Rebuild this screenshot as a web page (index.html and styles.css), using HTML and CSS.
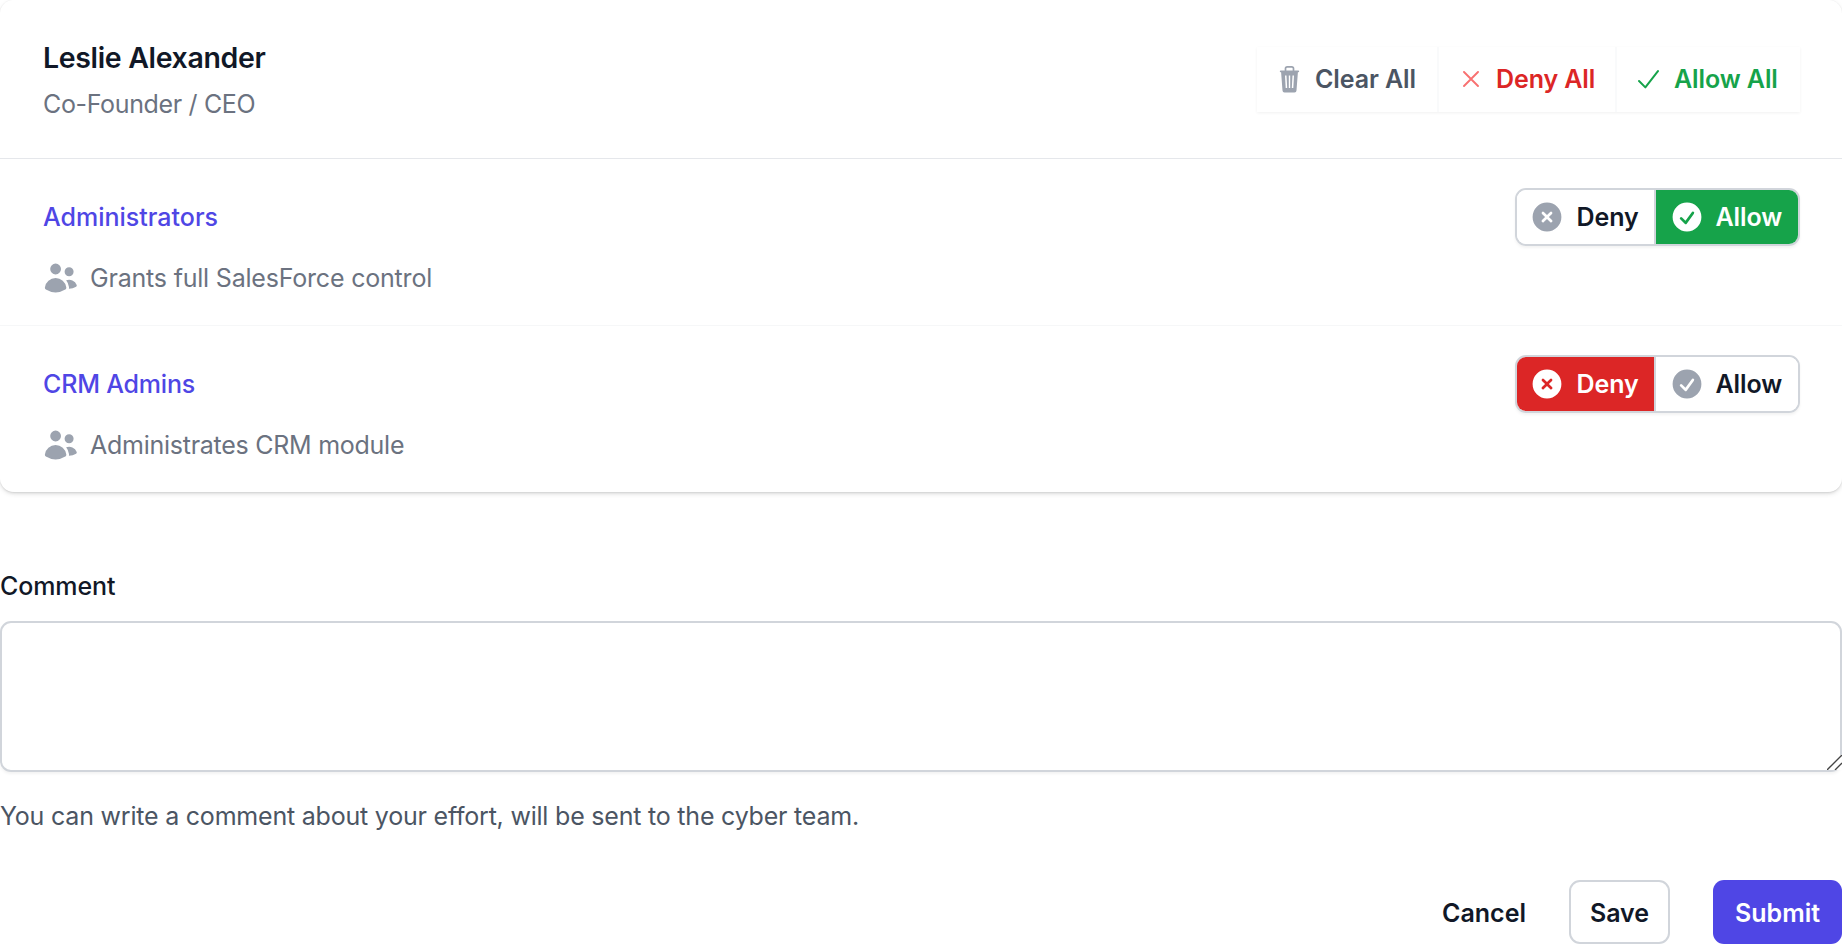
FILE: index.html
```html
<!DOCTYPE html>
<html lang="en">
<head>
<meta charset="utf-8">
<title>Access review</title>
<link rel="stylesheet" href="styles.css">
</head>
<body>
<svg class="sprite" aria-hidden="true">
  <symbol id="users" viewBox="0 0 20 20"><path d="M7 8a3 3 0 100-6 3 3 0 000 6zM14.5 9a2.5 2.5 0 100-5 2.5 2.5 0 000 5zM1.615 16.428a1.224 1.224 0 01-.569-1.175 6.002 6.002 0 0111.908 0c.058.467-.172.92-.57 1.174A9.953 9.953 0 017 18a9.953 9.953 0 01-5.385-1.572zM14.5 16h-.106c.07-.297.088-.611.048-.933a7.47 7.47 0 00-1.588-3.755 4.502 4.502 0 015.874 2.636.818.818 0 01-.36.98A7.465 7.465 0 0114.5 16z"/></symbol>
  <symbol id="x-circle" viewBox="0 0 20 20"><path fill-rule="evenodd" d="M10 18a8 8 0 100-16 8 8 0 000 16zM8.28 7.22a.75.75 0 00-1.06 1.06L8.94 10l-1.72 1.72a.75.75 0 101.06 1.06L10 11.06l1.72 1.72a.75.75 0 101.06-1.06L11.06 10l1.72-1.72a.75.75 0 00-1.06-1.06L10 8.94 8.28 7.22z"/></symbol>
  <symbol id="check-circle" viewBox="0 0 20 20"><path fill-rule="evenodd" d="M10 18a8 8 0 100-16 8 8 0 000 16zm3.857-9.809a.75.75 0 00-1.214-.882l-3.483 4.79-1.88-1.88a.75.75 0 10-1.06 1.061l2.5 2.5a.75.75 0 001.137-.089l4-5.5z"/></symbol>
</svg>
<main class="page">
  <section class="card">
    <header class="card-header">
      <div>
        <h1 class="name">Leslie Alexander</h1>
        <p class="role">Co-Founder / CEO</p>
      </div>
      <div class="bulk">
        <button class="bulk-btn clear"><svg class="icon-trash" viewBox="0 0 20 28"><path fill="none" stroke="currentColor" stroke-width="1.7" d="M6 6V3.6Q6 1.8 7.8 1.8h4.4Q14 1.8 14 3.6V6"/><path fill-rule="evenodd" d="M1.2 5.4h17.6a.9.9 0 010 1.8h-.4L17 25.6a2 2 0 01-2 1.9H5a2 2 0 01-2-1.9L1.6 7.2h-.4a.9.9 0 010-1.8zM5.5 10.4l.7 12.7h1.5L7 10.4zM9.3 10.4v12.7h1.4V10.4zM13 10.4l-.7 12.7h1.5l.7-12.7z"/></svg><span>Clear All</span></button>
        <button class="bulk-btn deny"><svg class="icon-x" viewBox="0 0 16 16"><path d="M1 1l14 14M15 1L1 15"/></svg><span>Deny All</span></button>
        <button class="bulk-btn allow"><svg class="icon-check" viewBox="0 0 20 18"><path d="M1 10.5l6 6L19 1"/></svg><span>Allow All</span></button>
      </div>
    </header>
    <ul class="roles">
      <li class="item">
        <div>
          <h2 class="group">Administrators</h2>
          <p class="desc"><svg><use href="#users"/></svg>Grants full SalesForce control</p>
        </div>
        <div class="toggle">
          <button class="opt"><svg><use href="#x-circle"/></svg>Deny</button>
          <button class="opt is-allow"><svg><use href="#check-circle"/></svg>Allow</button>
        </div>
      </li>
      <li class="item">
        <div>
          <h2 class="group">CRM Admins</h2>
          <p class="desc"><svg><use href="#users"/></svg>Administrates CRM module</p>
        </div>
        <div class="toggle">
          <button class="opt is-deny"><svg><use href="#x-circle"/></svg>Deny</button>
          <button class="opt"><svg><use href="#check-circle"/></svg>Allow</button>
        </div>
      </li>
    </ul>
  </section>
  <form class="form">
    <label class="label" for="comment">Comment</label>
    <div class="field">
      <textarea class="comment" id="comment"></textarea>
      <svg class="grip" viewBox="0 0 15 15"><path d="M0 15L15 0M8 15L15 8"/></svg>
    </div>
    <p class="hint">You can write a comment about your effort, will be sent to the cyber team.</p>
    <div class="actions">
      <button type="button" class="cancel">Cancel</button>
      <button type="button" class="save">Save</button>
      <button type="button" class="submit">Submit</button>
    </div>
  </form>
</main>
</body>
</html>
```
FILE: styles.css
```css
* { box-sizing: border-box; margin: 0; padding: 0; }
body { background: #fff; color: #111827; font-family: Inter, sans-serif; font-size: 25px; line-height: 36px; overflow: hidden; }
button { font: inherit; font-weight: 600; color: inherit; background: #fff; border: 0; white-space: nowrap; }
svg { fill: currentColor; flex: none; }
.sprite { display: none; }
.page { height: 944px; overflow: hidden; }
.card { height: 492px; border-radius: 14px; box-shadow: 0 0 0 1px rgba(17,24,39,.025), 0 2px 5px rgba(0,0,0,.1), 0 2px 3px -1px rgba(0,0,0,.1); }
.card-header { display: flex; justify-content: space-between; height: 159px; padding: 36px 42px 0 43px; border-bottom: 1px solid #e5e7eb; }
.name { font-size: 28.5px; font-weight: 600; line-height: 44px; letter-spacing: -.34px; }
.role { margin-top: 6px; color: #6b7280; letter-spacing: -.35px; }
.bulk { display: flex; height: 65px; margin-top: 11px; box-shadow: 0 1px 3px rgba(0,0,0,.06); }
.bulk-btn { display: flex; align-items: center; padding: 0; padding-bottom: 1px; letter-spacing: -.1px; }
.bulk-btn + .bulk-btn { border-left: 2px solid #f9fafb; }
.clear { width: 180px; padding-left: 22px; color: #4b5563; }
.deny { width: 178px; padding-left: 24px; color: #dc2626; }
.allow { width: 185px; padding-left: 21px; color: #16a34a; }
.icon-trash { width: 21px; height: 28px; margin-right: 15px; color: #9ca3af; }
.icon-x { width: 16px; height: 16px; margin-right: 17px; }
.icon-x path { fill: none; stroke: #f87171; stroke-width: 1.9; stroke-linecap: round; }
.icon-check { width: 21px; height: 19px; margin-right: 15px; }
.icon-check path { fill: none; stroke: #16a34a; stroke-width: 1.9; stroke-linecap: round; stroke-linejoin: round; }
.roles { list-style: none; }
.item { display: flex; justify-content: space-between; align-items: flex-start; height: 166px; padding: 29px 42px 0 43px; }
.item + .item { height: 167px; border-top: 1px solid #f6f7f8; }
.group { margin-top: 11px; font-size: 25px; font-weight: 500; line-height: 36px; color: #4f46e5; }
.item + .item .group { letter-spacing: -.2px; }
.desc { display: flex; align-items: center; gap: 11px; margin-top: 25px; color: #6b7280; letter-spacing: -.2px; }
.item + .item .desc { letter-spacing: -.26px; }
.desc svg { width: 36px; height: 36px; color: #9ca3af; }
.toggle { display: flex; width: 285px; height: 58px; border: 2px solid #d1d5db; border-radius: 11px; overflow: hidden; box-shadow: 0 2px 3px rgba(0,0,0,.05); }
.opt { display: flex; align-items: center; width: 137px; padding-left: 12px; gap: 11.5px; letter-spacing: -.1px; }
.opt + .opt { width: 144px; padding-left: 13px; gap: 10.5px; border-left: 2px solid #d1d5db; }
.opt svg { width: 36px; height: 36px; color: #9ca3af; }
.is-allow { background: #16a34a; color: #fff; }
.is-deny { background: #dc2626; color: #fff; }
.opt.is-allow svg, .opt.is-deny svg { color: #fff; }
.form { padding-top: 76px; }
.label { display: block; font-weight: 500; letter-spacing: -.1px; }
.field { position: relative; margin-top: 17px; height: 151px; }
.comment { display: block; width: 100%; height: 151px; border: 2px solid #d1d5db; border-radius: 11px; resize: none; box-shadow: 0 2px 3px rgba(0,0,0,.05); }
.grip { position: absolute; right: 0; bottom: 2px; width: 15px; height: 15px; background: #fff; }
.grip path { fill: none; stroke: #444; stroke-width: 1.4; }
.hint { margin-top: 26px; color: #4b5563; letter-spacing: -.21px; }
.actions { display: flex; justify-content: flex-end; margin-top: 46px; height: 64px; }
.actions button { padding-top: 2px; }
.cancel { margin-right: 43px; }
.save { width: 101px; margin-right: 43px; border: 2px solid #d1d5db; border-radius: 11px; }
.submit { width: 129px; border-radius: 11px; background: #4f46e5; color: #fff; }
```
